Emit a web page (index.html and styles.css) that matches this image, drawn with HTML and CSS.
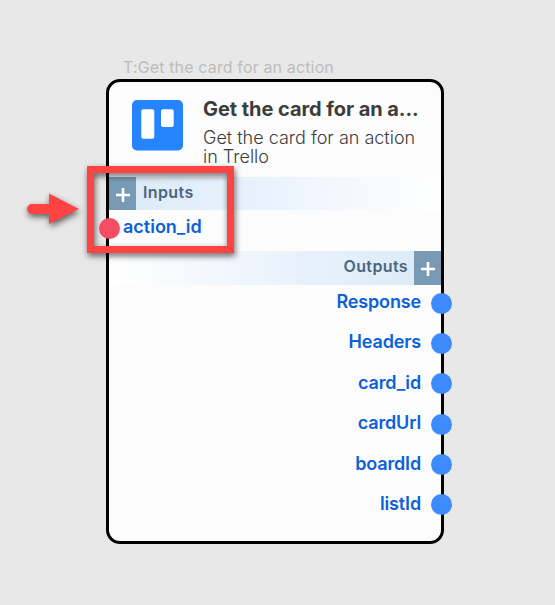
FILE: index.html
```html
<!DOCTYPE html>
<html lang="en">
<head>
<meta charset="utf-8">
<title>Trello action</title>
<link rel="stylesheet" href="styles.css">
</head>
<body>
<main class="node">
  <div class="caption">T:Get the card for an action</div>
  <section class="card">
    <header class="head">
      <svg class="logo" viewBox="0 0 51 51"><rect width="51" height="50.500" rx="5" fill="#2684ff"/><rect x="9.300" y="9.300" width="13" height="29.400" rx="2" fill="#fff"/><rect x="29" y="9.300" width="12.700" height="17.700" rx="2" fill="#fff"/></svg>
      <div class="text">
        <h1>Get the card for an a...</h1>
        <p>Get the card for an action<br>in Trello</p>
      </div>
    </header>
    <div class="bar bar-in">
      <span class="add"><svg viewBox="0 0 14 14"><path d="M7 0v14M0 7h14"/></svg></span>
      <span class="label">Inputs</span>
    </div>
    <div class="input"><i class="dot dot-in"></i><span>action_id</span></div>
    <div class="bar bar-out">
      <span class="label">Outputs</span>
      <span class="add"><svg viewBox="0 0 14 14"><path d="M7 0v14M0 7h14"/></svg></span>
    </div>
    <div class="outputs">
      <div class="port"><span>Response</span><i class="dot"></i></div>
      <div class="port"><span>Headers</span><i class="dot"></i></div>
      <div class="port"><span>card_id</span><i class="dot"></i></div>
      <div class="port"><span>cardUrl</span><i class="dot"></i></div>
      <div class="port"><span>boardId</span><i class="dot"></i></div>
      <div class="port"><span>listId</span><i class="dot"></i></div>
    </div>
  </section>
</main>
<div class="highlight"></div>
<svg class="arrow" viewBox="0 0 60 40"><path d="M8 10h17V-.500L55 15 25 30V20H8a5 5 0 0 1 0-10z"/></svg>
</body>
</html>
```
FILE: styles.css
```css
* { box-sizing: border-box; }
body {
  margin: 0;
  height: 605px;
  overflow: hidden;
  position: relative;
  background: #e8e8e8;
  font-family: Inter, "Liberation Sans", sans-serif;
}
.node { width: 338px; margin-left: 106px; padding-top: 58px; }
.caption { height: 21px; padding-left: 17px; font-size: 16px; line-height: 18px; letter-spacing: .14px; color: #bdbdbd; white-space: nowrap; }
.card { height: 465px; border: 3px solid #000; border-radius: 14px; background: #fcfcfc; }
.head { display: flex; height: 95px; padding: 18px 0 0 23px; }
.logo { width: 51px; height: 51px; flex: none; }
.text { margin-left: 20px; white-space: nowrap; color: #3c3c3c; }
h1 { margin: -3px 0 0; font-size: 20px; line-height: 24px; font-weight: 700; letter-spacing: -.06px; }
p { margin: 7px 0 0; font-size: 18px; line-height: 19px; font-weight: 300; }
.bar { display: flex; height: 33px; color: #4c6580; font-size: 16px; font-weight: 600; line-height: 31px; letter-spacing: .38px; }
.bar-in { background: linear-gradient(90deg, #d9eaf7, #ebf3fc 50%, #fff); }
.bar-out { height: 34px; justify-content: flex-end; background: linear-gradient(90deg, #fff, #ebf3fc 50%, #d9eaf7); }
.bar-in .label { margin-left: 7px; }
.bar-out .label { margin-right: 6px; }
.add { display: flex; width: 27px; background: #789ab5; justify-content: center; align-items: center; padding-top: 2px; }
.add svg { width: 14px; height: 14px; fill: none; stroke: #fff; stroke-width: 2.6; }
.input { display: flex; height: 41px; padding-top: 8px; margin-left: -10px; color: #0b61d8; font-size: 18px; font-weight: 600; line-height: 18px; }
.dot { width: 21px; height: 21px; flex: none; border-radius: 50%; background: #3d8bfd; }
.dot-in { background: #f54d64; margin-right: 3px; }
.outputs { margin-right: -11px; padding-top: 7px; }
.port { display: flex; justify-content: flex-end; height: 40.4px; color: #0b61d8; font-size: 18px; font-weight: 600; line-height: 20px; letter-spacing: -.15px; }
.port .dot { margin: .5px 0 0 10px; }
.highlight { position: absolute; left: 87px; top: 166px; width: 147px; height: 87px; border: 7px solid #ff4343; filter: drop-shadow(1px 3px 3px #0009); }
.arrow { position: absolute; left: 24px; top: 194px; width: 60px; height: 40px; overflow: visible; fill: #ff4343; filter: drop-shadow(1px 3px 3px #0009); }
```
